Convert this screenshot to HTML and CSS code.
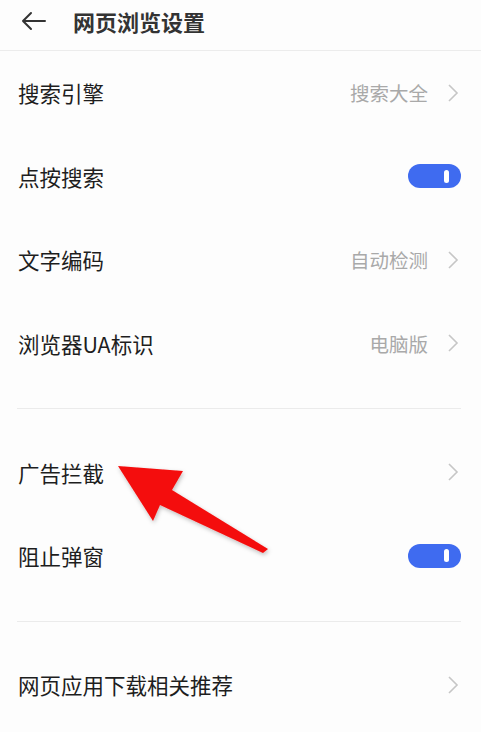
FILE: index.html
```html
<!DOCTYPE html>
<html lang="zh-CN">
<head>
<meta charset="utf-8">
<title>网页浏览设置</title>
<link rel="stylesheet" href="styles.css">
</head>
<body>
<div class="page">
  <header class="header">
    <svg class="back" width="26" height="20" viewBox="0 0 26 20"><path d="M11 2 L3 10 L11 18 M3 10 H25" fill="none" stroke="#333" stroke-width="2" stroke-linecap="round" stroke-linejoin="round"/></svg>
    <h1 class="title">网页浏览设置</h1>
  </header>
  <section class="group">
    <div class="row"><span class="label">搜索引擎</span><span class="value">搜索大全</span><svg class="chev" width="12" height="20" viewBox="0 0 12 20"><path d="M2 2 L10 10 L2 18" fill="none" stroke="#c6c6c6" stroke-width="1.6"/></svg></div>
    <div class="row"><span class="label">点按搜索</span><span class="toggle"><span class="knob"></span></span></div>
    <div class="row"><span class="label">文字编码</span><span class="value">自动检测</span><svg class="chev" width="12" height="20" viewBox="0 0 12 20"><path d="M2 2 L10 10 L2 18" fill="none" stroke="#c6c6c6" stroke-width="1.6"/></svg></div>
    <div class="row"><span class="label">浏览器UA标识</span><span class="value">电脑版</span><svg class="chev" width="12" height="20" viewBox="0 0 12 20"><path d="M2 2 L10 10 L2 18" fill="none" stroke="#c6c6c6" stroke-width="1.6"/></svg></div>
  </section>
  <div class="divider"></div>
  <section class="group">
    <div class="row"><span class="label">广告拦截</span><svg class="chev" width="12" height="20" viewBox="0 0 12 20"><path d="M2 2 L10 10 L2 18" fill="none" stroke="#c6c6c6" stroke-width="1.6"/></svg></div>
    <div class="row"><span class="label">阻止弹窗</span><span class="toggle"><span class="knob"></span></span></div>
  </section>
  <div class="divider"></div>
  <section class="group">
    <div class="row"><span class="label">网页应用下载相关推荐</span><svg class="chev" width="12" height="20" viewBox="0 0 12 20"><path d="M2 2 L10 10 L2 18" fill="none" stroke="#c6c6c6" stroke-width="1.6"/></svg></div>
  </section>
  <svg class="arrow" width="481" height="732" viewBox="0 0 481 732">
    <defs><filter id="sh" x="-20%" y="-20%" width="140%" height="140%"><feDropShadow dx="1" dy="2" stdDeviation="2" flood-color="#000" flood-opacity="0.25"/></filter></defs>
    <polygon points="118,466 183,471 172,490 268,549 263,553 160,505 153,521" fill="#f40d0d" filter="url(#sh)"/>
  </svg>
</div>
</body>
</html>
```
FILE: styles.css
```css
html, body {
  margin: 0;
  padding: 0;
  background: #fdfdfd;
}
body {
  font-family: "Noto Sans CJK SC", "Noto Sans", sans-serif;
  color: #222;
}
.page {
  position: relative;
  width: 481px;
  height: 732px;
  overflow: hidden;
}
.header {
  height: 51px;
  box-sizing: border-box;
  border-bottom: 1px solid #ececec;
  display: flex;
  align-items: center;
  padding-left: 20px;
  padding-bottom: 8px;
  gap: 27px;
}
.back { display: block; }
.title {
  margin: 0;
  font-size: 22px;
  font-weight: 700;
  color: #333;
}
.group {
  padding: 0;
}
.row {
  height: 83.5px;
  display: flex;
  align-items: center;
  padding: 0 20px 0 18px;
}
.label {
  flex: 1;
  font-size: 21.5px;
  color: #1e1e1e;
}
.value {
  font-size: 19.5px;
  color: #a9a9a9;
  margin-right: 19px;
}
.chev { display: block; margin-right: 2px; }
.toggle {
  width: 53px;
  height: 24px;
  border-radius: 12px;
  background: #3f6bf0;
  display: flex;
  align-items: center;
  justify-content: flex-end;
  padding-right: 12px;
  box-sizing: border-box;
}
.knob {
  width: 5px;
  height: 13px;
  border-radius: 3px;
  background: #fff;
}
.divider {
  margin: 23px 20px 21.5px 17px;
  height: 1px;
  background: #ebebeb;
}
.arrow {
  position: absolute;
  left: 0;
  top: 0;
  pointer-events: none;
}
```
